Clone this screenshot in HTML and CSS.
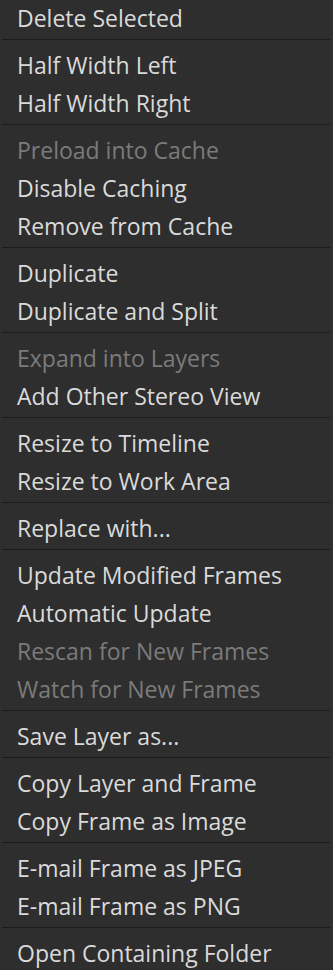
FILE: index.html
```html
<!DOCTYPE html>
<html lang="en">
<head>
    <meta charset="UTF-8">
    <title>Context Menu</title>
    <link rel="stylesheet" href="styles.css">
</head>
<body>
    <div class="menu">
        <div class="item first">Delete Selected</div>
        <div class="sep"></div>
        <div class="item">Half Width Left</div>
        <div class="item">Half Width Right</div>
        <div class="sep"></div>
        <div class="item disabled">Preload into Cache</div>
        <div class="item">Disable Caching</div>
        <div class="item">Remove from Cache</div>
        <div class="sep"></div>
        <div class="item">Duplicate</div>
        <div class="item">Duplicate and Split</div>
        <div class="sep"></div>
        <div class="item disabled">Expand into Layers</div>
        <div class="item">Add Other Stereo View</div>
        <div class="sep"></div>
        <div class="item">Resize to Timeline</div>
        <div class="item">Resize to Work Area</div>
        <div class="sep"></div>
        <div class="item">Replace with...</div>
        <div class="sep"></div>
        <div class="item">Update Modified Frames</div>
        <div class="item">Automatic Update</div>
        <div class="item disabled">Rescan for New Frames</div>
        <div class="item disabled">Watch for New Frames</div>
        <div class="sep"></div>
        <div class="item">Save Layer as...</div>
        <div class="sep"></div>
        <div class="item">Copy Layer and Frame</div>
        <div class="item">Copy Frame as Image</div>
        <div class="sep"></div>
        <div class="item">E-mail Frame as JPEG</div>
        <div class="item">E-mail Frame as PNG</div>
        <div class="sep"></div>
        <div class="item">Open Containing Folder</div>
    </div>
</body>
</html>
```

FILE: styles.css
```css
:root {
    --menu-bg: #2e2e2e;
    --text-color: #dadada;
    --disabled-color: #7b7b7b;
    --sep-color: #1c1c1c;
}
html, body {
    margin: 0;
    padding: 0;
    background-color: var(--menu-bg);
}
body {
    font-family: 'Open Sans', 'Noto Sans', sans-serif;
    color: var(--text-color);
    overflow: hidden;
}
.menu {
    width: 333px;
    height: 970px;
    display: flex;
    flex-direction: column;
}
.item {
    height: 38px;
    line-height: 38px;
    padding-left: 17px;
    font-size: 23px;
    white-space: nowrap;
    flex-shrink: 0;
}
.item.first {
    margin-top: -1px;
}
.item.disabled {
    color: var(--disabled-color);
}
.sep {
    height: 1px;
    margin: 2px 3px 6px 2px;
    background-color: var(--sep-color);
    flex-shrink: 0;
}
```
